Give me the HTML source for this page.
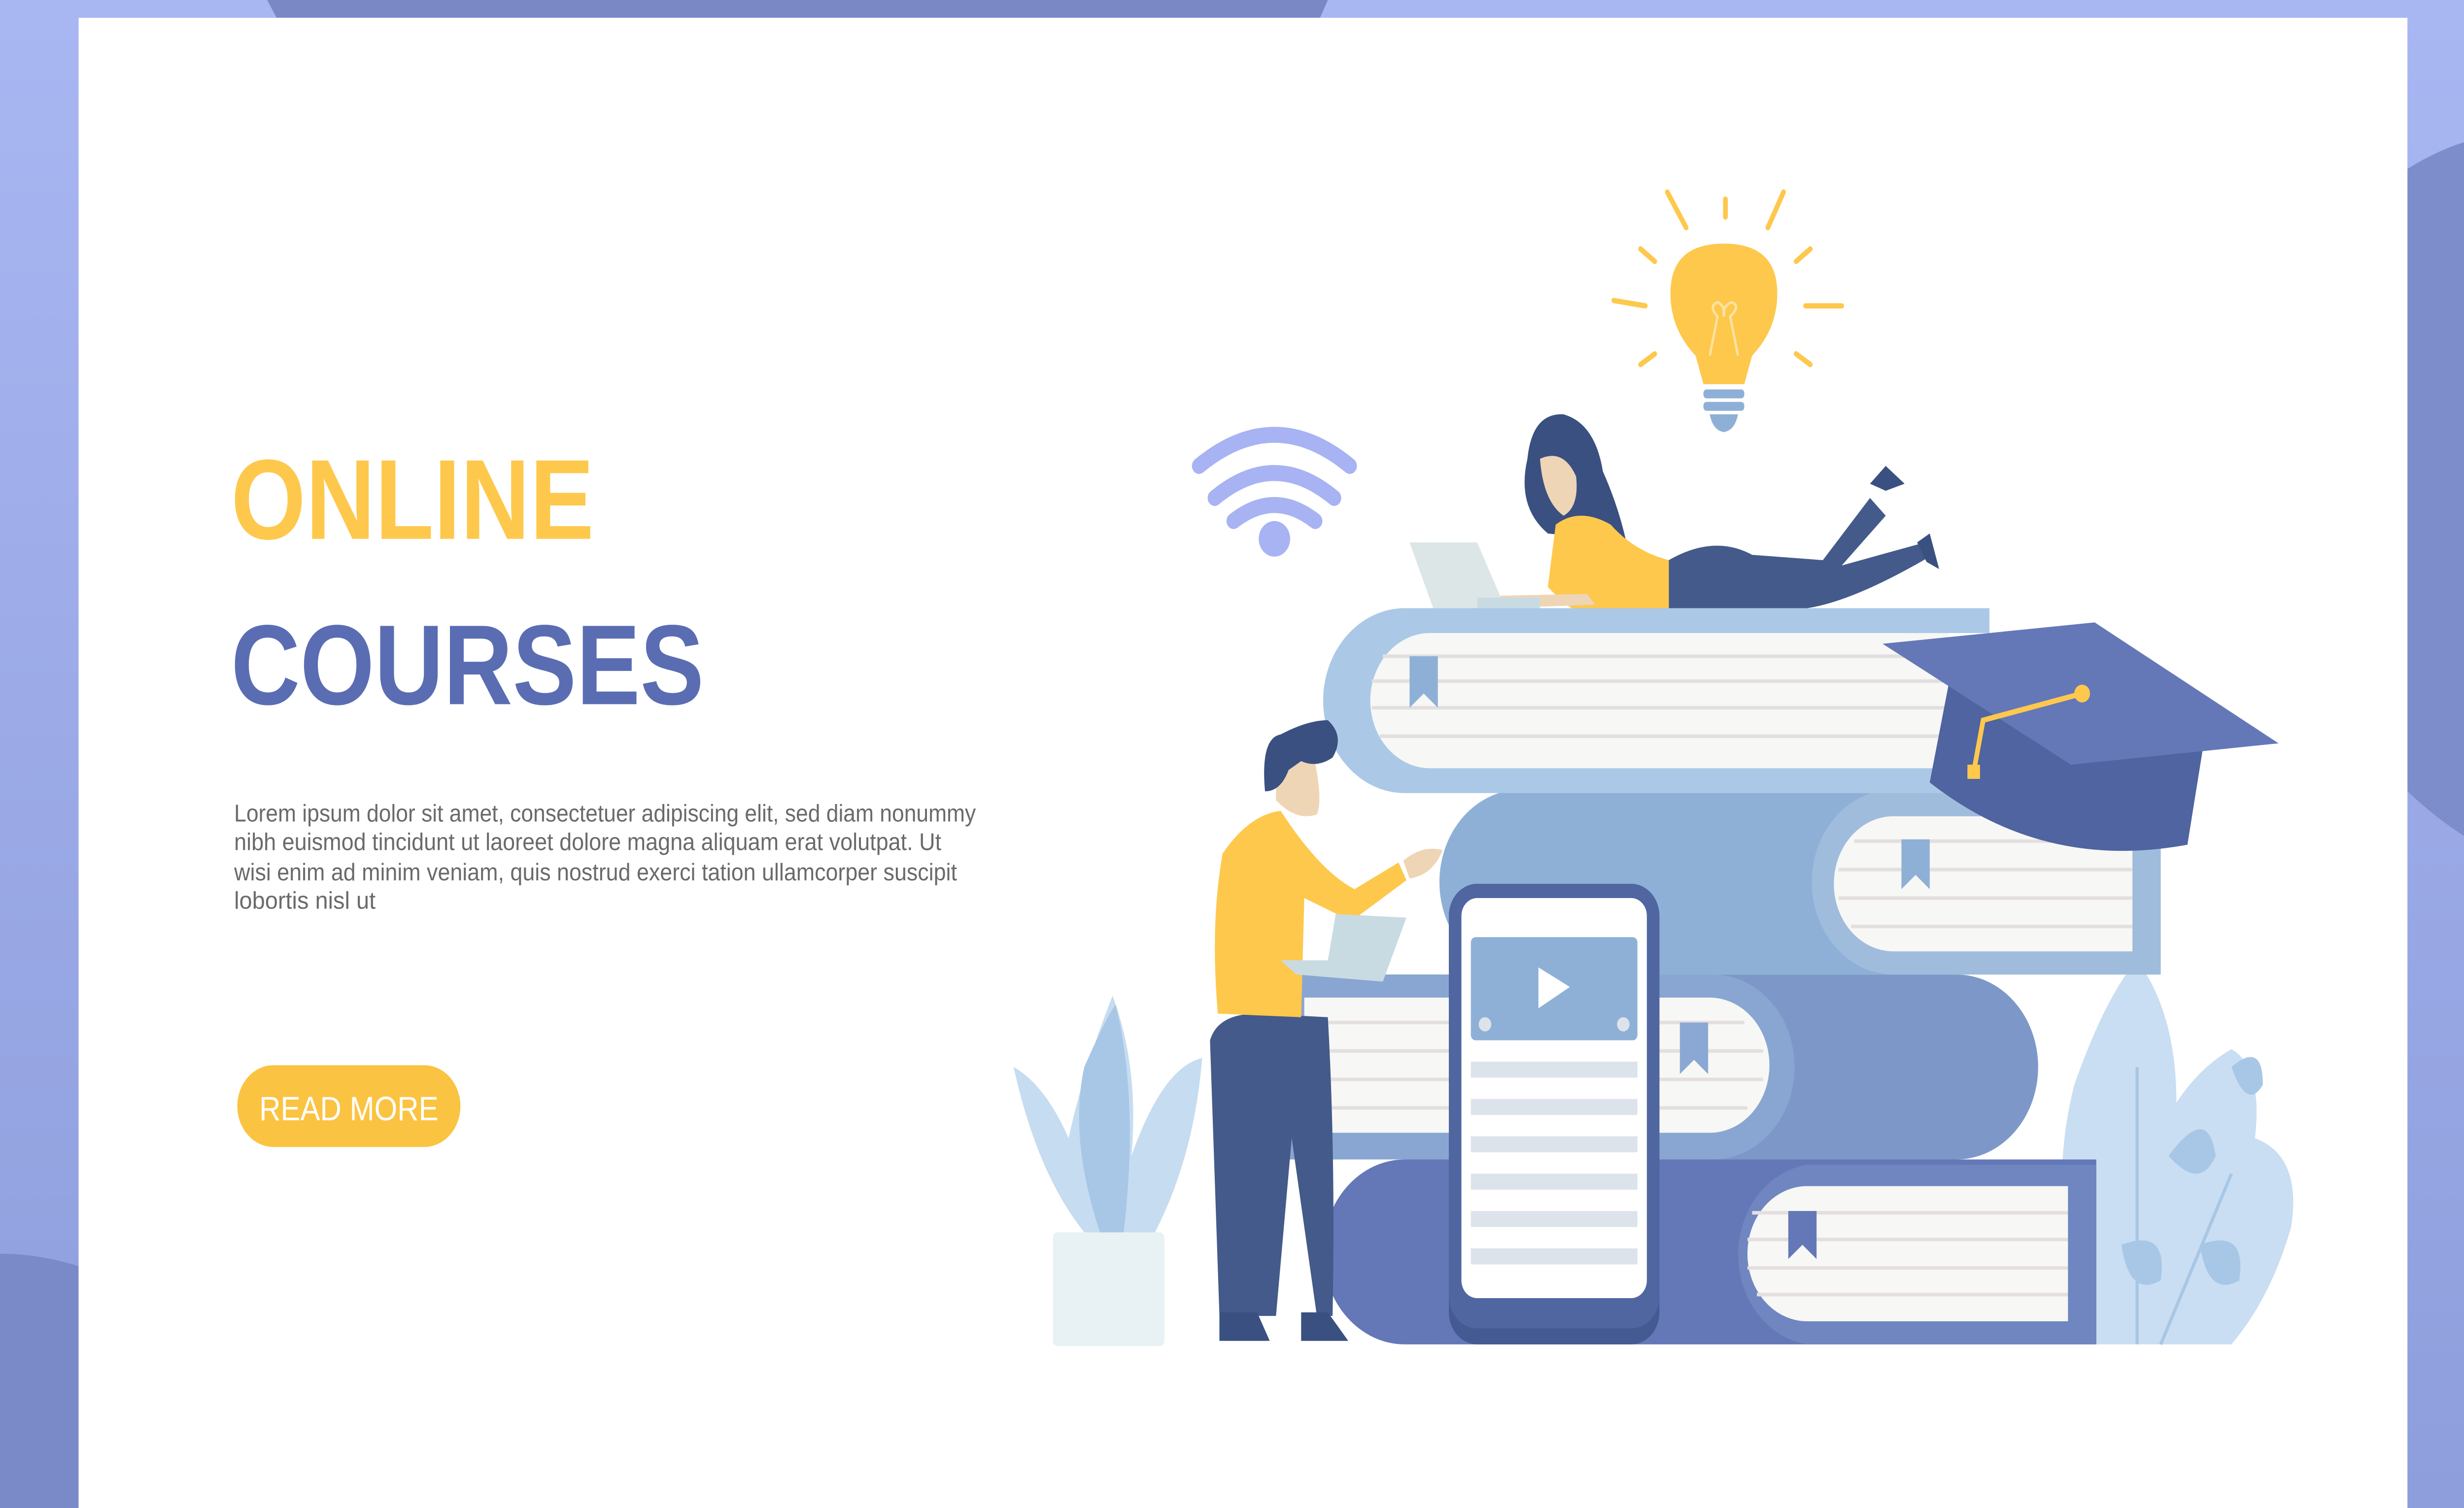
<!DOCTYPE html>
<html><head><meta charset="utf-8"><style>html,body{margin:0;padding:0;overflow:hidden;background:#fff;width:100%;height:100%}svg{display:block;width:100vw;height:100vh}</style></head>
<body>
<svg viewBox="0 0 1568 848" preserveAspectRatio="none" xmlns="http://www.w3.org/2000/svg">
<defs>
<linearGradient id="bg" x1="0" y1="0" x2="0" y2="1"><stop offset="0" stop-color="#a8b6f2"/><stop offset="1" stop-color="#8e9edc"/></linearGradient>
</defs>
<rect width="1568" height="848" fill="url(#bg)"/>
<path d="M170,0 H845 L840,10 H176 Z" fill="#7a89c6"/>
<path d="M1532,95 Q1550,85 1568,80 V470 Q1550,460 1532,445 Z" fill="#7d8dcb"/>
<path d="M0,705 Q25,705 50,712 V848 H0 Z" fill="#7a8ac8"/>
<rect x="50" y="10" width="1482" height="838" fill="#ffffff"/>

<text x="147" y="303" font-family="Liberation Sans, sans-serif" font-weight="bold" font-size="64" fill="#fec84d" textLength="231" lengthAdjust="spacingAndGlyphs">ONLINE</text>
<text x="147" y="396" font-family="Liberation Sans, sans-serif" font-weight="bold" font-size="64" fill="#5a6db3" textLength="301" lengthAdjust="spacingAndGlyphs">COURSES</text>
<g font-family="Liberation Sans, sans-serif" font-size="13.5" fill="#6a6a6a">
<text x="149" y="462" textLength="472" lengthAdjust="spacingAndGlyphs">Lorem ipsum dolor sit amet, consectetuer adipiscing elit, sed diam nonummy</text>
<text x="149" y="478" textLength="450" lengthAdjust="spacingAndGlyphs">nibh euismod tincidunt ut laoreet dolore magna aliquam erat volutpat. Ut</text>
<text x="149" y="495" textLength="460" lengthAdjust="spacingAndGlyphs">wisi enim ad minim veniam, quis nostrud exerci tation ullamcorper suscipit</text>
<text x="149" y="511" textLength="90" lengthAdjust="spacingAndGlyphs">lobortis nisl ut</text>
</g>
<rect x="151" y="599" width="142" height="46" rx="23" fill="#fbc342"/>
<text x="222" y="630" text-anchor="middle" font-family="Liberation Sans, sans-serif" font-size="19" fill="#ffffff" textLength="114" lengthAdjust="spacingAndGlyphs">READ MORE</text>

<path d="M1330,756 Q1300,680 1320,610 Q1340,560 1360,540 Q1385,570 1385,620 Q1400,600 1420,590 Q1440,600 1435,640 Q1465,650 1458,690 Q1445,730 1420,756 Z" fill="#c9def2"/>
<g stroke="#a8c7e6" stroke-width="2" fill="none"><path d="M1360,756 L1360,600"/><path d="M1375,756 L1420,660"/></g>
<path d="M1380,650 Q1405,620 1410,650 Q1400,670 1380,650Z M1350,700 Q1380,690 1375,720 Q1355,730 1350,700Z M1420,600 Q1440,585 1440,610 Q1430,625 1420,600Z M1400,700 Q1430,690 1425,720 Q1405,730 1400,700Z" fill="#a8c7e6"/>

<path d="M690,693 Q660,660 645,600 Q665,610 680,640 Q690,600 708,560 Q725,600 720,650 Q740,600 765,595 Q760,650 735,693 Z" fill="#c6dcf0"/>
<path d="M700,693 Q680,640 690,600 Q705,570 710,565 Q725,620 715,693Z" fill="#a8c7e6"/>
<rect x="670" y="693" width="71" height="64" rx="3" fill="#e8f2f5"/>

<path d="M1334,652 H894 A52,52 0 0 0 894,756 H1334 Z" fill="#6478b8"/>
<path d="M1334,655 H1150 A51,51 0 0 0 1150,756 H1334 Z" fill="#6f86c0"/>
<path d="M1316,667 H1150 A38,38 0 0 0 1150,743 H1316 Z" fill="#f7f7f5"/>
<g stroke="#e4dfdf" stroke-width="2"><line x1="1115" y1="682" x2="1316" y2="682"/><line x1="1112" y1="697" x2="1316" y2="697"/><line x1="1112" y1="713" x2="1316" y2="713"/><line x1="1118" y1="728" x2="1316" y2="728"/></g>
<path d="M1138,681 H1156 V708 L1147,700 L1138,708 Z" fill="#6478b8"/>

<path d="M800,548 H1245 A52,52 0 0 1 1245,652 H800 Z" fill="#7d98c8"/>
<path d="M800,548 H1090 A52,52 0 0 1 1090,652 H800 Z" fill="#89a6d2"/>
<path d="M830,561 H1088 A38,38 0 0 1 1088,637 H830 Z" fill="#f7f7f5"/>
<g stroke="#e4dfdf" stroke-width="2"><line x1="830" y1="575" x2="1110" y2="575"/><line x1="830" y1="591" x2="1122" y2="591"/><line x1="830" y1="607" x2="1122" y2="607"/><line x1="830" y1="623" x2="1112" y2="623"/></g>
<path d="M1069,575 H1087 V604 L1078,596 L1069,604 Z" fill="#8ba8d4"/>

<path d="M1375,444 H968 A52,52 0 0 0 968,548 H1375 Z" fill="#8fb0d6"/>
<path d="M1375,444 H1205 A52,52 0 0 0 1205,548 H1375 Z" fill="#a0bcdc"/>
<path d="M1357,459 H1205 A38,38 0 0 0 1205,535 H1357 Z" fill="#f7f7f5"/>
<g stroke="#e4dfdf" stroke-width="2"><line x1="1180" y1="473" x2="1357" y2="473"/><line x1="1170" y1="489" x2="1357" y2="489"/><line x1="1170" y1="505" x2="1357" y2="505"/><line x1="1178" y1="521" x2="1357" y2="521"/></g>
<path d="M1210,472 H1228 V500 L1219,492 L1210,500 Z" fill="#8fb0d6"/>

<path d="M1266,342 H894 A52,52 0 0 0 894,446 H1240 V356 H1266 Z" fill="#abc9e6"/>
<path d="M1240,356 H910 A38,38 0 0 0 910,432 H1240 Z" fill="#f7f7f5"/>
<g stroke="#e4dfdf" stroke-width="2"><line x1="880" y1="369" x2="1240" y2="369"/><line x1="873" y1="383" x2="1240" y2="383"/><line x1="873" y1="398" x2="1240" y2="398"/><line x1="878" y1="414" x2="1240" y2="414"/></g>
<path d="M897,369 H915 V398 L906,390 L897,398 Z" fill="#8fb0d6"/>

<path d="M1240,385 L1228,440 Q1300,490 1392,475 L1402,420 L1318,430 Z" fill="#4f64a0"/>
<path d="M1198,362 L1333,350 L1450,418 L1318,430 Z" fill="#6478b8"/>
<path d="M1325,390 L1262,405 L1256,434" stroke="#fec84d" stroke-width="3" fill="none"/>
<circle cx="1325" cy="390" r="5" fill="#fec84d"/>
<rect x="1252" y="430" width="8" height="8" fill="#fec84d"/>

<rect x="922" y="497" width="134" height="259" rx="18" fill="#445a92"/>
<rect x="922" y="497" width="134" height="250" rx="18" fill="#4f66a0"/>
<rect x="930" y="505" width="118" height="225" rx="10" fill="#ffffff"/>
<rect x="936" y="527" width="106" height="58" rx="3" fill="#8fb0d6"/>
<polygon points="979,544 979,567 999,555" fill="#ffffff"/>
<circle cx="945" cy="576" r="4" fill="#dde3ea"/><circle cx="1033" cy="576" r="4" fill="#dde3ea"/>
<g fill="#dde3ea"><rect x="936" y="597" width="106" height="9"/><rect x="936" y="618" width="106" height="9"/><rect x="936" y="639" width="106" height="9"/><rect x="936" y="660" width="106" height="9"/><rect x="936" y="681" width="106" height="9"/><rect x="936" y="702" width="106" height="9"/></g>

<path d="M776,740 L770,585 Q775,570 800,570 L845,572 Q850,650 848,740 L838,740 L822,640 L812,740 Z" fill="#435a8a"/>
<path d="M776,738 H800 L808,754 H776Z M828,738 H845 L858,754 H828Z" fill="#3a5080"/>
<path d="M778,480 Q795,458 815,456 Q840,490 862,500 L890,485 L895,495 L860,518 L830,505 L828,572 L775,570 Q770,520 778,480Z" fill="#fec84d"/>
<path d="M893,484 Q905,475 918,478 Q912,492 897,494Z" fill="#eed5b6"/>
<path d="M812,425 L836,425 Q842,450 838,458 Q825,462 812,450Z" fill="#eed5b6"/>
<path d="M805,445 Q802,415 815,413 Q832,405 845,405 Q856,414 848,426 Q838,432 828,428 L820,433 Q815,445 805,445Z" fill="#3a5080"/>
<path d="M850,514 L895,516 L880,552 L825,548 L815,540 L845,540Z" fill="#c8dbe3"/>

<path d="M1060,316 Q1090,300 1115,312 L1160,315 L1190,280 L1200,290 L1172,318 L1225,305 L1230,312 Q1180,338 1150,342 L1060,342 Z" fill="#435a8a"/>
<path d="M1190,272 L1200,262 L1212,272 L1200,276Z M1220,305 L1228,300 L1234,320 L1226,316Z" fill="#3a5080"/>
<path d="M972,258 Q975,232 995,233 Q1015,238 1020,265 Q1030,285 1035,305 L985,300 Q965,285 972,258Z" fill="#3a5080"/>
<path d="M980,258 Q995,252 1003,268 Q1005,285 995,290 Q982,282 980,258Z" fill="#eed5b6"/>
<path d="M990,295 Q1005,285 1025,295 Q1040,310 1062,315 V342 L1000,342 Q990,335 985,330Z" fill="#fec84d"/>
<path d="M955,335 L1010,334 L1015,340 L955,342Z" fill="#eed5b6"/>
<path d="M897,305 L940,305 L958,342 L912,342Z" fill="#dde6e6"/>
<rect x="940" y="336" width="40" height="6" fill="#c8dbe3"/>

<g stroke="#a7b3f3" stroke-width="9" stroke-linecap="round" fill="none">
<path d="M763,262 Q811,227 859,262"/>
<path d="M773,280 Q811,252 849,280"/>
<path d="M785,293 Q811,275 837,293"/>
</g>
<circle cx="811" cy="303" r="10" fill="#a7b3f3"/>

<path d="M1063,165 Q1063,137 1097,137 Q1131,137 1131,165 Q1131,185 1115,200 L1110,216 H1084 L1079,200 Q1063,185 1063,165Z" fill="#fec84d"/>
<path d="M1088,200 L1093,178 Q1087,172 1093,170 Q1098,172 1097,178 Q1096,172 1102,170 Q1108,172 1101,178 L1106,200" stroke="#fbe3a0" stroke-width="1.5" fill="none"/>
<rect x="1084" y="219" width="26" height="5" rx="2" fill="#8fb0d6"/>
<rect x="1084" y="226" width="26" height="5" rx="2" fill="#8fb0d6"/>
<path d="M1088,233 H1106 Q1104,242 1097,243 Q1090,242 1088,233Z" fill="#8fb0d6"/>
<g stroke="#fec84d" stroke-width="3" stroke-linecap="round">
<line x1="1061" y1="108" x2="1073" y2="128"/><line x1="1098" y1="112" x2="1098" y2="122"/><line x1="1135" y1="108" x2="1125" y2="128"/>
<line x1="1044" y1="140" x2="1053" y2="147"/><line x1="1152" y1="140" x2="1143" y2="147"/>
<line x1="1027" y1="169" x2="1047" y2="172"/><line x1="1149" y1="172" x2="1172" y2="172"/>
<line x1="1044" y1="205" x2="1053" y2="199"/><line x1="1152" y1="205" x2="1143" y2="199"/>
</g>
</svg>
</body></html>
